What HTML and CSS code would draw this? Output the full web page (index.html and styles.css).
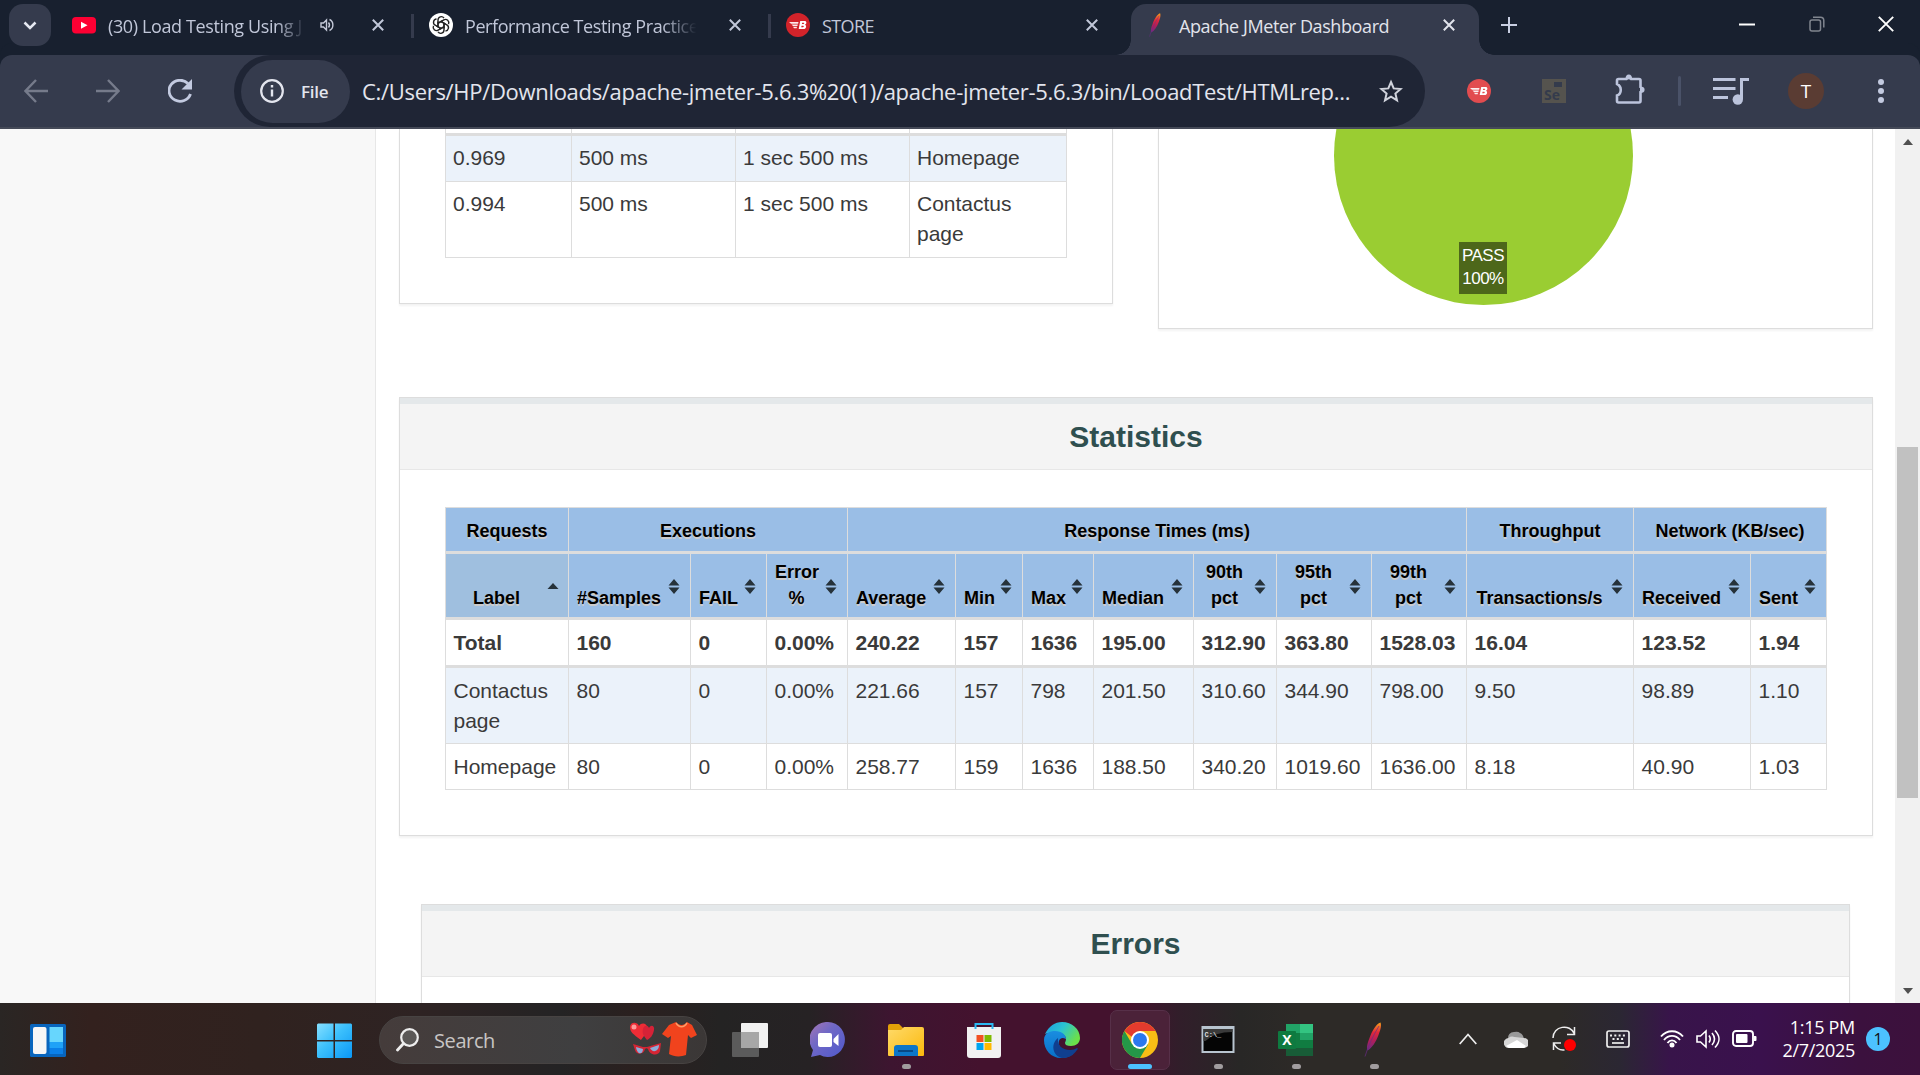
FILE: index.html
```html
<!DOCTYPE html>
<html lang="en">
<head>
<meta charset="utf-8">
<title>Apache JMeter Dashboard</title>
<link rel="stylesheet" href="styles.css">
</head>
<body>
<svg width="0" height="0" class="defs">
  <defs>
    <linearGradient id="fg" x1="0" y1="0" x2="0" y2="1"><stop offset="0" stop-color="#f9a11b"/><stop offset=".35" stop-color="#e0293a"/><stop offset=".65" stop-color="#b01e5a"/><stop offset="1" stop-color="#6a2b85"/></linearGradient>
    <linearGradient id="win" x1="0" y1="0" x2="1" y2="1"><stop offset="0" stop-color="#86e0ff"/><stop offset=".45" stop-color="#3cc0fc"/><stop offset="1" stop-color="#0a97f5"/></linearGradient>
    <linearGradient id="edge1" x1="0" y1="0" x2="1" y2=".5"><stop offset="0" stop-color="#1b9de2"/><stop offset=".5" stop-color="#2bc3d2"/><stop offset="1" stop-color="#6be04a"/></linearGradient>
    <linearGradient id="edge2" x1="0" y1="0" x2="0" y2="1"><stop offset="0" stop-color="#1a8de0"/><stop offset="1" stop-color="#0870c8"/></linearGradient>
    <linearGradient id="chat" x1="0" y1="0" x2="1" y2="1"><stop offset="0" stop-color="#a676b4"/><stop offset=".4" stop-color="#6f68c6"/><stop offset="1" stop-color="#5058cc"/></linearGradient>
    <linearGradient id="folder" x1="0" y1="0" x2="1" y2="1"><stop offset="0" stop-color="#ffda6a"/><stop offset="1" stop-color="#fbb90c"/></linearGradient>
    <symbol id="x" viewBox="0 0 12 12"><path d="M.8.8l10.4 10.4M11.2.8L.8 11.2" fill="none" stroke="currentColor" stroke-width="2"/></symbol>
    <symbol id="feather" viewBox="0 0 18 35"><path d="M16.5.5C12 2 8 9 5.500 16 3 22 2.500 26 3.500 28.500 8 26 12 20 14.500 13 17 7 17.500 3 16.500.5z" fill="url(#fg)"/><path d="M15 4C9 14 4 24 1 34.500" fill="none" stroke="#6a2b85" stroke-width="1" opacity=".7"/></symbol>
    <symbol id="blaze" viewBox="0 0 24 24"><circle cx="12" cy="12" r="12" fill="currentColor"/><path d="M3 9h9.500l-.4 1.700H5zM5.500 11.500h6.300l-.4 1.500H7zM7 13.800h4l-.3 1.500H8z" fill="#fff" opacity=".9"/><path d="M14.200 8h4.500c2 0 2.300 2.800.3 3.700 2 .9 1.200 4.300-1.300 4.300h-5zm2 1.700l-.3 1.300h1.500c1 0 1.100-1.300.2-1.300zm-.6 3l-.4 1.600h1.700c1.100 0 1.200-1.600.2-1.600z" fill="#fff"/></symbol>
    <symbol id="sort" viewBox="0 0 12 15"><path d="M6 0l5.500 6.500H.5zM6 15l5.500-6.500H.5z" fill="#26323a"/></symbol>
  </defs>
</svg>

<header class="tabs">
  <button class="tab-search"><svg width="14" height="9" viewBox="0 0 14 9"><path d="M1.500 1.500L7 7l5.500-5.500" fill="none" stroke="#e6e9f2" stroke-width="2.500"/></svg></button>
  <div class="tab">
    <svg class="fav" viewBox="0 0 24 24"><rect y="4" width="24" height="16.500" rx="4" fill="#fe0033"/><path d="M9 8.800v7l6.500-3.500z" fill="#fff"/></svg>
    <span class="title t1">(30) Load Testing Using J</span>
    <svg class="sound" width="14" height="14" viewBox="0 0 14 14" fill="none" stroke="#c4c9d8" stroke-width="1.400"><path d="M1 5h2.500L6.500 2v10L3.500 9H1zM8.500 4.500q2 2.500 0 5M9.500 1.500c4.500 2 4.500 9 0 11"/></svg>
    <svg class="close"><use href="#x"/></svg>
  </div>
  <div class="tab sep">
    <svg class="fav" viewBox="0 0 24 24"><circle cx="12" cy="12" r="12" fill="#fff"/><g fill="none" stroke="#222" stroke-width="1.400"><path id="k" d="M9 10.300V7a3.300 3.300 0 0 1 6-1.900M9 10.300l3-1.800 4.600 2.700"/><use href="#k" transform="rotate(60 12 12)"/><use href="#k" transform="rotate(120 12 12)"/><use href="#k" transform="rotate(180 12 12)"/><use href="#k" transform="rotate(240 12 12)"/><use href="#k" transform="rotate(300 12 12)"/></g></svg>
    <span class="title t2">Performance Testing Practice</span>
    <svg class="close"><use href="#x"/></svg>
  </div>
  <div class="tab sep">
    <svg class="fav store"><use href="#blaze"/></svg>
    <span class="title t3">STORE</span>
    <svg class="close"><use href="#x"/></svg>
  </div>
  <div class="tab active">
    <svg class="fav"><use href="#feather"/></svg>
    <span class="title t4">Apache JMeter Dashboard</span>
    <svg class="close"><use href="#x"/></svg>
  </div>
  <svg class="plus" width="16" height="16" viewBox="0 0 16 16"><path d="M8 0v16M0 8h16" stroke="#c9cfe2" stroke-width="2"/></svg>
  <div class="controls">
    <svg width="16" height="16" viewBox="0 0 16 16"><path d="M0 8.500h16" stroke="#fff" stroke-width="2"/></svg>
    <svg width="16" height="16" viewBox="0 0 16 16"><g fill="none" stroke="#80858f" stroke-width="1.500"><rect x="1" y="4" width="10.500" height="11" rx="2"/><path d="M4 1.200h7.500a3.300 3.300 0 0 1 3.300 3.300v7"/></g></svg>
    <svg width="16" height="16" viewBox="0 0 16 16"><path d="M.8.8l14.400 14.400M15.200.8L.8 15.200" stroke="#fff" stroke-width="1.900"/></svg>
  </div>
</header>

<nav class="toolbar">
  <svg class="nav" viewBox="0 0 24 24"><path d="M24 12H1.500M12 1L1.500 12 12 23" fill="none" stroke="#767b8b" stroke-width="2.400"/></svg>
  <svg class="nav" viewBox="0 0 24 24"><path d="M0 12h22.500M12 1l10.500 11L12 23" fill="none" stroke="#767b8b" stroke-width="2.400"/></svg>
  <svg class="nav" viewBox="0 0 24 24"><path d="M22.500 15A11 10.500 0 1 1 20 4.500" fill="none" stroke="#c3cae0" stroke-width="2.800"/><path d="M24 0v10.500H13.500z" fill="#c3cae0"/></svg>
  <div class="omnibox">
    <div class="chip"><svg width="24" height="24" viewBox="0 0 24 24"><circle cx="12" cy="12" r="10.800" fill="none" stroke="#e3e5ee" stroke-width="2.200"/><path d="M12 10.500v7M12 6v2.400" stroke="#e3e5ee" stroke-width="2.400"/></svg><span>File</span></div>
    <span class="url">C:/Users/HP/Downloads/apache-jmeter-5.6.3%20(1)/apache-jmeter-5.6.3/bin/LooadTest/HTMLrep...</span>
    <svg class="star" width="24" height="24" viewBox="0 0 24 24"><path d="M12 3l2.700 6.400 6.900.6-5.200 4.500 1.600 6.800-6-3.600-6 3.600 1.600-6.800L2.400 10l6.900-.6z" fill="none" stroke="#d0d3dc" stroke-width="2"/></svg>
  </div>
  <svg class="ext blaze"><use href="#blaze"/></svg>
  <div class="ext se"><i></i>Se</div>
  <svg class="puzzle" width="30" height="30" viewBox="0 0 30 30"><path d="M4 5h7.500a3 3 0 0 1 4.500 0H24a1.500 1.500 0 0 1 1.500 1.500V13a3 3 0 0 1 0 5v9a1.500 1.500 0 0 1-1.500 1.500H3.500A1.500 1.500 0 0 1 2 27v-5.500c5-2 5-9 0-11.500V6.500A1.500 1.500 0 0 1 3.500 5z" fill="none" stroke="#bcc4dc" stroke-width="2.600"/><path d="M10.500 5a3.300 4.600 0 0 1 6.600 0zM25 12.500a4.600 3.300 0 0 1 0 6.600z" fill="#bcc4dc"/></svg>
  <i class="divider"></i>
  <svg class="media" width="36" height="29" viewBox="0 0 36 29"><path d="M0 2.500h22.500M0 11.500h22.500M0 20.500h15" stroke="#bcc4dc" stroke-width="2.800"/><path d="M28.500 22V2.500H36" fill="none" stroke="#bcc4dc" stroke-width="3"/><circle cx="24.800" cy="22.500" r="5.200" fill="#bcc4dc"/></svg>
  <div class="avatar">T</div>
  <svg class="dots" width="6" height="24" viewBox="0 0 6 24" fill="#c3cae0"><circle cx="3" cy="3" r="3"/><circle cx="3" cy="12" r="3"/><circle cx="3" cy="21" r="3"/></svg>
</nav>

<div class="page">
  <aside></aside>
  <main>
    <div class="top">
      <section class="card apdex">
        <table class="t-apdex">
          <colgroup><col class="a1"><col class="a2"><col class="a3"><col class="a4"></colgroup>
          <tbody>
          <tr class="cut"><td></td><td></td><td></td><td></td></tr>
          <tr class="odd"><td>0.969</td><td>500 ms</td><td>1 sec 500 ms</td><td>Homepage</td></tr>
          <tr class="two"><td>0.994</td><td>500 ms</td><td>1 sec 500 ms</td><td>Contactus page</td></tr>
          </tbody>
        </table>
      </section>
      <section class="card summary">
        <div class="pie"><div class="pie-label">PASS<br>100%</div></div>
      </section>
    </div>
    <section class="panel stats">
      <h2>Statistics</h2>
      <table class="t-stats">
        <colgroup><col class="c1"><col class="c2"><col class="c3"><col class="c4"><col class="c5"><col class="c6"><col class="c7"><col class="c8"><col class="c9"><col class="c10"><col class="c11"><col class="c12"><col class="c13"><col class="c14"></colgroup>
        <thead>
          <tr class="groups"><th>Requests</th><th colspan="3">Executions</th><th colspan="7">Response Times (ms)</th><th>Throughput</th><th colspan="2">Network (KB/sec)</th></tr>
          <tr class="labels">
            <th class="sorted">Label<svg viewBox="0 0 12 15"><path d="M6 4l5.500 6H.5z" fill="#26323a"/></svg></th>
            <th>#Samples<svg><use href="#sort"/></svg></th><th>FAIL<svg><use href="#sort"/></svg></th><th>Error<br>%<svg><use href="#sort"/></svg></th><th>Average<svg><use href="#sort"/></svg></th><th>Min<svg><use href="#sort"/></svg></th><th>Max<svg><use href="#sort"/></svg></th><th>Median<svg><use href="#sort"/></svg></th><th>90th<br>pct<svg><use href="#sort"/></svg></th><th>95th<br>pct<svg><use href="#sort"/></svg></th><th>99th<br>pct<svg><use href="#sort"/></svg></th><th>Transactions/s<svg><use href="#sort"/></svg></th><th>Received<svg><use href="#sort"/></svg></th><th>Sent<svg><use href="#sort"/></svg></th>
          </tr>
        </thead>
        <tbody>
          <tr class="total"><td>Total</td><td>160</td><td>0</td><td>0.00%</td><td>240.22</td><td>157</td><td>1636</td><td>195.00</td><td>312.90</td><td>363.80</td><td>1528.03</td><td>16.04</td><td>123.52</td><td>1.94</td></tr>
          <tr class="odd two"><td>Contactus page</td><td>80</td><td>0</td><td>0.00%</td><td>221.66</td><td>157</td><td>798</td><td>201.50</td><td>310.60</td><td>344.90</td><td>798.00</td><td>9.50</td><td>98.89</td><td>1.10</td></tr>
          <tr><td>Homepage</td><td>80</td><td>0</td><td>0.00%</td><td>258.77</td><td>159</td><td>1636</td><td>188.50</td><td>340.20</td><td>1019.60</td><td>1636.00</td><td>8.18</td><td>40.90</td><td>1.03</td></tr>
        </tbody>
      </table>
    </section>
    <section class="panel errors"><h2>Errors</h2></section>
  </main>
  <div class="scroll"><i class="up"></i><i class="thumb"></i><i class="down"></i></div>
</div>

<footer class="taskbar">
  <svg class="widgets" width="36" height="33" viewBox="0 0 36 33"><rect width="36" height="33" rx="1.500" fill="#0865bd"/><rect x="3" y="3" width="13.500" height="27" rx="2" fill="#f6f6f6"/><path d="M19.500 3H33v15H19.500z" fill="#67d6fd"/><path d="M19.500 18H33v6H19.500z" fill="#1fa2f7"/><path d="M19.500 24H33v6H19.500z" fill="#0b80e8"/></svg>
  <svg class="windows" width="35" height="36" viewBox="0 0 35 36"><path d="M1 .5h15.500V17H0V1.500zM18 .5h16l1 1V17H18zM0 18.500h16.500V35H1l-1-1zM18 18.500h17V34l-1 1H18z" fill="url(#win)"/></svg>
  <div class="search">
    <svg width="23" height="24" viewBox="0 0 23 24"><circle cx="13.500" cy="9.500" r="8.300" fill="#5b5857" stroke="#eee" stroke-width="2.200"/><path d="M7.500 15.500L1.500 22" stroke="#eee" stroke-width="2.800" stroke-linecap="round"/></svg>
    <span>Search</span>
    <svg class="love" width="68" height="36" viewBox="0 0 68 36"><path d="M12 18C4 12 1 10 1 5c0-5 7-6 9-1 2-4 8-3 8 1 0 5-2 8-6 13z" fill="#ee2c36"/><circle cx="5" cy="5" r="2.500" fill="#ff9a9a"/><path d="M18 18c-4-5-5-7-4-11s5-4 6-1c2-4 6-2 5 2-1 5-3 8-7 10z" fill="#d62237"/><path d="M4 22l10 3h4l14-4-1 8c-1 5-10 5-12-2-1-1-2-1-3 0-1 6-9 6-10 1z" fill="#d52534"/><path d="M7 25l7 2c0 6-6 6-7-2zM21 26l9-3c0 7-7 8-9 3z" fill="#8dacd8"/><path d="M40 3l7-3c3 4 8 4 11 0l5 3 5 10-6 3-3-3-2 20c-5 2-12 2-17-1l2-18-3 2-6-4z" fill="#f1431d"/><path d="M47 1c3 5 8 5 11 0" fill="none" stroke="#ff9b65" stroke-width="1.500"/></svg>
  </div>
  <div class="apps">
    <div class="app"><svg viewBox="0 0 36 36"><rect x="9" y="1" width="27" height="25" rx="1" fill="#f1f1f1"/><rect y="10" width="27" height="25" rx="1" fill="#5b5b5b"/><path d="M9 10h18v16H9z" fill="#a7a7a7"/></svg></div>
    <div class="app"><svg viewBox="0 0 36 36"><path d="M18 0a17 17.500 0 1 1-8 33L1 35l2-7A17.500 17.500 0 0 1 18 0z" fill="url(#chat)"/><rect x="8" y="11" width="14" height="14" rx="2" fill="#fff"/><path d="M23.500 17l5-5v12l-5-4z" fill="#fff"/></svg></div>
    <div class="app run"><svg viewBox="0 0 36 36"><path d="M0 4q0-2 2-2h9l4 4h19v5H0z" fill="#e3a008"/><path d="M0 8h13l3-3h18q2 0 2 2v26q0 1-1 1H1q-1 0-1-1z" fill="url(#folder)"/><path d="M6 34V26q0-3 3-3h18q3 0 3 3v8z" fill="#0c76c9"/><path d="M10 29h15" stroke="#07457f" stroke-width="1.800"/></svg></div>
    <div class="app"><svg viewBox="0 0 36 36"><path d="M1 5h34v28q0 3-3 3H4q-3 0-3-3z" fill="#f1f1f1"/><path d="M9.500 7V2h17v5" fill="none" stroke="#2bb9f2" stroke-width="2"/><path d="M10.500 13h7v7h-7z" fill="#f25022"/><path d="M18.500 13h7v7h-7z" fill="#7fba00"/><path d="M10.500 21h7v7h-7z" fill="#00a4ef"/><path d="M18.500 21h7v7h-7z" fill="#ffb900"/></svg></div>
    <div class="app"><svg viewBox="0 0 36 36"><path d="M1 12C5 4 11 0 18 0c10 0 18 7 18 16 0 5-4 8-9 8-4 0-6-1-6-3 0-1 1-2 1-4C22 11 11 8 1 12z" fill="url(#edge1)"/><path d="M0 18C0 11 6 9 11 9c7 0 11 4 11 8-6-3-8 2-7 6 2 7 8 9 14 9-4 3-8 4-12 4C7 36 0 28 0 18z" fill="url(#edge2)"/><path d="M14 16c-1 7 4 12 12 12 3 0 5-1 7-2 1 0 1 1 0 2-4 6-9 8-15 8-9-2-12-14-4-20z" fill="#103f8f"/></svg></div>
    <div class="app run current"><svg viewBox="0 0 36 36"><circle cx="18" cy="18" r="18" fill="#f8bd15"/><path d="M2.400 9A18 18 0 0 0 18 36l8-13.500-8-4.500-8 4z" fill="#249748"/><path d="M2.400 9q6-9 15.600-9 10 0 15.600 9H18q-6 1-8 6z" fill="#e33b2e"/><circle cx="18" cy="18" r="9" fill="#fff"/><circle cx="18" cy="18" r="7" fill="#2b78ee"/></svg></div>
    <div class="app run"><svg viewBox="0 0 36 36"><path d="M1.500 4h33v27h-33z" fill="#b8c4cf"/><path d="M3.500 7h29v22h-29z" fill="#050505"/><path d="M3.500 7h29v3q-18 0-27 9h-2z" fill="#3a3a3a"/><text x="4.500" y="15" class="cmd">C:\_</text></svg></div>
    <div class="app run"><svg viewBox="0 0 36 36"><path d="M8 2h27v32H8z" fill="#107c41"/><path d="M8 2h14v9H8z" fill="#21a366"/><path d="M22 2h13v9H22z" fill="#33c481"/><path d="M22 11h13v7H22z" fill="#21a366"/><path d="M8 26h27v8H8z" fill="#185c37"/><rect y="9" width="18" height="18" rx="1" fill="#0e7a40"/><text x="9" y="23" class="xl">X</text></svg></div>
    <div class="app run"><svg viewBox="0 0 36 36"><use href="#feather" x="8" y="0" width="18" height="35"/></svg></div>
  </div>
  <div class="tray">
    <svg class="chev" width="18" height="12" viewBox="0 0 18 12"><path d="M.7 11L9 1.500 17.300 11" fill="none" stroke="#eee" stroke-width="1.700"/></svg>
    <svg class="cloud" width="24" height="17" viewBox="0 0 24 17"><path d="M4 8a6 6 0 0 1 6-7q4-1 6 1 3 1 4 6z" fill="#999"/><path d="M5 17a5 5 0 0 1-.5-10 6 6 0 0 1 6-1L20 7a5 5 0 0 1 0 10z" fill="#d6d6d6"/><path d="M2 15l11-6 9 6-2 2H5z" fill="#fff"/></svg>
    <svg class="sync" width="24" height="26" viewBox="0 0 24 26"><path d="M1 12C1 0 18-3 22.500 8M22.500 1v7.500H15M1.500 24v-7H9M1.500 17q4 8 11 7" fill="none" stroke="#eee" stroke-width="1.500"/><circle cx="18" cy="19" r="6" fill="red"/></svg>
    <svg class="kbd" width="24" height="18" viewBox="0 0 24 18"><rect x="1" y="1" width="22" height="16" rx="2" fill="none" stroke="#eee" stroke-width="1.700"/><path d="M4 5.500h16M6.500 9h12" stroke="#eee" stroke-width="2" stroke-dasharray="2 2.300"/><path d="M6 13h12" stroke="#eee" stroke-width="1.700"/></svg>
    <svg class="wifi" width="24" height="18" viewBox="0 0 24 18"><g fill="none" stroke="#fff" stroke-width="1.900"><path d="M1 6.500C7-.5 17-.5 23 6.500M4 10c4.500-5.500 11.500-5.500 16 0M7.500 13c2.500-3.500 6.500-3.500 9 0"/></g><circle cx="12" cy="15" r="2.500" fill="#fff"/></svg>
    <svg class="vol" width="24" height="20" viewBox="0 0 24 20"><g fill="none" stroke="#fff" stroke-width="1.600"><path d="M1 7h3.500L10 2v16l-5.500-5H1zM13 6.500q2.500 3.500 0 7M16 4q5 6 0 12M19 1.500c5.500 6 5.500 11 0 17"/></g></svg>
    <svg class="bat" width="25" height="17" viewBox="0 0 25 17"><rect x="1" y="1" width="20" height="15" rx="3" fill="none" stroke="#fff" stroke-width="1.900"/><rect x="4" y="4" width="11.500" height="9" rx="1" fill="#fff"/><path d="M22 6h1.500q1 0 1 1v3q0 1-1 1H22z" fill="#fff"/></svg>
    <div class="clock"><span>1:15 PM</span><span>2/7/2025</span></div>
    <div class="count">1</div>
  </div>
</footer>
</body>
</html>
```

FILE: styles.css
```css
* { box-sizing: border-box; }
body { margin: 0; width: 1920px; height: 1075px; overflow: hidden; font-family: "Liberation Sans", Arial, sans-serif; background: #fff; }
svg { display: block; flex: none; }
.defs { position: absolute; }

/* tab strip */
.tabs { display: flex; height: 55px; background: #18202f; font-family: "Open Sans", "Noto Sans", sans-serif; }
.tab-search { width: 42px; height: 42px; margin: 4px 12px 0 9px; padding: 0; border: 0; border-radius: 14px; background: #353b4d; display: flex; align-items: center; justify-content: center; flex: none; }
.tab { position: relative; display: flex; width: 357px; flex: none; padding-left: 9px; color: #c1c7d9; }
.fav { width: 24px; height: 24px; margin-top: 13px; }
.fav.store { color: #d2232a; }
.title { margin: 14px 0 0 12px; font-size: 18px; line-height: 24px; white-space: nowrap; height: 30px; flex: none; }
.t1 { width: 200px; letter-spacing: -.38px; -webkit-mask-image: linear-gradient(90deg, #000 84%, transparent 99%); mask-image: linear-gradient(90deg, #000 84%, transparent 99%); }
.t2 { width: 234px; letter-spacing: -.42px; -webkit-mask-image: linear-gradient(90deg, #000 84%, transparent 99%); mask-image: linear-gradient(90deg, #000 84%, transparent 99%); }
.t3 { letter-spacing: -.6px; }
.t4 { letter-spacing: -.4px; }
.sound { margin: 18px 0 0 12px; }
.close { width: 12px; height: 12px; margin: 19px 36px 0 auto; }
.sep::before { content: ""; position: absolute; left: -9px; top: 14px; width: 3px; height: 24px; background: #353b4d; }
.active { width: 348px; height: 51px; margin: 4px 0 0 -3px; border-radius: 15px 15px 0 0; background: #353b4d; color: #e2e4ec; padding-left: 12px; }
.active .fav { margin-top: 9px; }
.active .title { margin-top: 10px; }
.active .close { margin: 15px 24px 0 auto; }
.active::before, .active::after { content: ""; position: absolute; bottom: 0; width: 15px; height: 15px; }
.active::before { left: -15px; background: radial-gradient(circle at 0 0, transparent 14.5px, #353b4d 15px); }
.active::after { right: -15px; background: radial-gradient(circle at 100% 0, transparent 14.5px, #353b4d 15px); }
.plus { margin: 17px 0 0 22px; }
.controls { display: flex; gap: 54px; margin: 16px 26px 0 auto; }
.controls svg:last-child { margin-left: -1px; }

/* toolbar */
.toolbar { display: flex; align-items: center; height: 74px; padding-left: 24px; background: #353b4d; border-bottom: 2px solid #454a58; border-radius: 12px 12px 0 0; box-shadow: 0 -12px 0 #18202f; font-family: "Open Sans", "Noto Sans", sans-serif; }
.nav { width: 24px; height: 24px; margin-right: 48px; }
.omnibox { display: flex; align-items: center; width: 1191px; height: 72px; margin-left: -6px; padding-left: 7px; border-radius: 36px; background: #1f2535; flex: none; }
.chip { display: flex; align-items: center; width: 109px; height: 63px; padding-left: 19px; gap: 17px; border-radius: 32px; background: #353b4d; color: #e3e5ee; font-size: 17px; font-weight: 600; letter-spacing: -.3px; flex: none; }
.url { margin-left: 12px; width: 1001px; font-size: 22px; letter-spacing: -.31px; color: #e3e5ee; white-space: nowrap; flex: none; }
.star { margin-left: 16px; }
.ext { width: 24px; height: 24px; margin-left: 42px; flex: none; }
.blaze { color: #e24c4f; }
.se { margin-left: 51px; background: #55534e; color: #343b4c; font: bold 14px/32px "Open Sans", sans-serif; padding-left: 2px; position: relative; }
.se i { position: absolute; right: 4px; top: 3px; width: 8px; height: 5px; background: #343b4c; }
.puzzle { margin: 0 0 4px 49px; }
.divider { width: 3px; height: 30px; margin-left: 33px; background: #4a5268; border-radius: 2px; }
.media { margin-left: 32px; }
.avatar { width: 36px; height: 36px; margin-left: 39px; border-radius: 50%; background: #5a3c33; color: #fff; font-size: 19px; line-height: 36px; text-align: center; flex: none; }
.dots { margin-left: 54px; }

/* document */
.page { display: flex; height: 874px; overflow: hidden; color: #3a3a3a; }
aside { width: 376px; background: #f8f8f8; border-right: 1px solid #e7e7e7; flex: none; }
main { width: 1519px; padding: 0 22px 0 23px; flex: none; }
.top { display: flex; align-items: flex-start; height: 268px; gap: 45px; }
.card { border: 1px solid #ddd; border-top: 0; box-shadow: 0 2px 2px rgba(0,0,0,.05); }
.apdex { width: 714px; height: 175px; padding-left: 45px; }
.summary { width: 715px; height: 200px; overflow: hidden; display: flex; justify-content: center; align-items: flex-end; padding: 0 65px 23px 0; }
.pie { width: 299px; height: 299px; border-radius: 50%; background: #9acd32; display: flex; justify-content: center; align-items: flex-end; padding-bottom: 11px; flex: none; }
.pie-label { width: 48px; height: 52px; background: #4d671a; color: #fff; font-size: 17px; line-height: 23px; padding-top: 2px; text-align: center; letter-spacing: -.5px; }
table { table-layout: fixed; border-collapse: separate; border-spacing: 0; border-left: 1px solid #ddd; font-size: 21px; line-height: 30px; }
td, th { border-right: 1px solid #ddd; border-bottom: 1px solid #ddd; padding: 8px 0 0 7.5px; text-align: left; vertical-align: top; }
tbody tr { height: 46px; }
.odd td { background: #ebf2fa; }
tbody tr.two { height: 76px; }
.t-apdex { width: 622px; }
.t-apdex td { padding: 7px 7px 0; }
.t-apdex .cut td { padding: 0; border-bottom-width: 3px; height: 7px; }
tbody tr.cut { height: 7px; }
.a1 { width: 126px; } .a2 { width: 164px; } .a3 { width: 174px; } .a4 { width: 157px; }

.panel { border: 1px solid #ddd; box-shadow: 0 2px 2px rgba(0,0,0,.05); }
.panel h2 { margin: 0; height: 72px; border-top: 6px solid #e4e8ea; border-bottom: 1px solid #e7e7e7; background: #f4f4f4; color: #2f4f4f; font-size: 30px; line-height: 66px; text-align: center; }
.stats { height: 439px; margin-bottom: 68px; }
.errors { height: 200px; margin: 0 23px 0 22px; }
.t-stats { width: 1382px; margin: 37px 0 0 45px; border-top: 1px solid #ddd; }
th { position: relative; background: #9abee6; color: #000; font-size: 18px; line-height: 26px; text-align: center; text-shadow: 0 2px 0 #ccc; border-bottom-width: 3px; white-space: nowrap; }
.groups { height: 46px; }
.groups th { padding: 10px 0 0; }
.labels { height: 66px; }
.labels th { vertical-align: bottom; padding: 0 29px 6px 8px; }
.labels svg { position: absolute; right: 10px; top: 25px; width: 12px; height: 15px; }
.labels .sorted { background: #9fbfdf; }
.labels .sorted svg { right: 9px; }
tbody tr.total { height: 48px; }
.total td { font-weight: bold; border-bottom-width: 3px; background: #fff; }
.c1 { width: 123px; } .c2 { width: 122px; } .c3 { width: 76px; } .c4 { width: 81px; } .c5 { width: 108px; } .c6 { width: 67px; } .c7 { width: 71px; }
.c8 { width: 100px; } .c9 { width: 83px; } .c10 { width: 95px; } .c11 { width: 95px; } .c12 { width: 167px; } .c13 { width: 117px; } .c14 { width: 76px; }

.scroll { display: flex; flex-direction: column; align-items: center; width: 25px; background: #f1f1f1; padding: 10px 0 9px; }
.up { border: 5px solid transparent; border-top: 0; border-bottom: 6px solid #505050; }
.down { border: 5px solid transparent; border-bottom: 0; border-top: 6px solid #505050; margin-top: auto; }
.thumb { width: 21px; height: 351px; margin-top: 302px; background: #c1c1c1; }

/* taskbar */
.taskbar { display: flex; height: 72px; font-family: "Open Sans", "Noto Sans", sans-serif; background: linear-gradient(90deg, #2a2624 0, #33211e 90px, #30221f 260px, #2e2323 420px, #242324 560px, #2b201f 640px, #242323 720px, #262224 810px, #3d1530 890px, #44122e 980px, #44122e 1130px, #311e2a 1180px, #282726 1240px, #2d2a27 1300px, #2d2a27 1560px, #2b2733 1620px, #38144a 1670px, #3a114d 1760px, #3b113e 1860px, #3c113c 1920px); }
.widgets { margin: 21px 0 0 30px; }
.windows { margin: 20px 0 0 251px; }
.search { display: flex; align-items: center; width: 328px; height: 48px; margin: 13px 0 0 27px; padding-left: 16px; border: 1px solid #474342; border-radius: 24px; background: linear-gradient(90deg, #453c3b, #3f3f40 60%, #3b3736); color: #c8c5c4; font-size: 20px; }
.search span { margin-left: 15px; letter-spacing: -.4px; flex: 1; }
.love { margin-right: 9px; }
.apps { display: flex; margin-left: 4px; flex: none; }
.app { display: flex; flex-direction: column; align-items: center; width: 60px; height: 60px; margin: 7px 9px 0; padding-top: 12px; border-radius: 7px; flex: none; }
.app svg { width: 36px; height: 36px; }
.run::after { content: ""; width: 9px; height: 5px; margin-top: 6px; border-radius: 3px; background: #a09c9e; }
.current { background: #4b2239; border: 1px solid #573049; padding-top: 11px; }
.current::after { width: 24px; background: #4cc2ff; }
.cmd { font: bold 7px "Liberation Mono", monospace; fill: #ddd; }
.xl { font: bold 14px "Open Sans", sans-serif; fill: #fff; text-anchor: middle; }
.tray { display: flex; align-items: flex-start; margin-left: 46px; flex: none; }
.chev { margin-top: 30px; }
.cloud { margin: 28px 0 0 27px; }
.sync { margin: 23px 0 0 24px; }
.kbd { margin: 27px 0 0 30px; }
.wifi { margin: 27px 0 0 30px; }
.vol { margin: 26px 0 0 12px; }
.bat { margin: 27px 0 0 12px; }
.clock { display: flex; flex-direction: column; align-items: flex-end; width: 98px; margin-top: 13px; color: #fff; font-size: 18px; line-height: 23px; letter-spacing: -.3px; white-space: nowrap; }
.count { width: 24px; height: 24px; margin: 24px 0 0 11px; border-radius: 50%; background: #4cc2ff; color: #111; font-size: 16px; line-height: 24px; text-align: center; }
```
